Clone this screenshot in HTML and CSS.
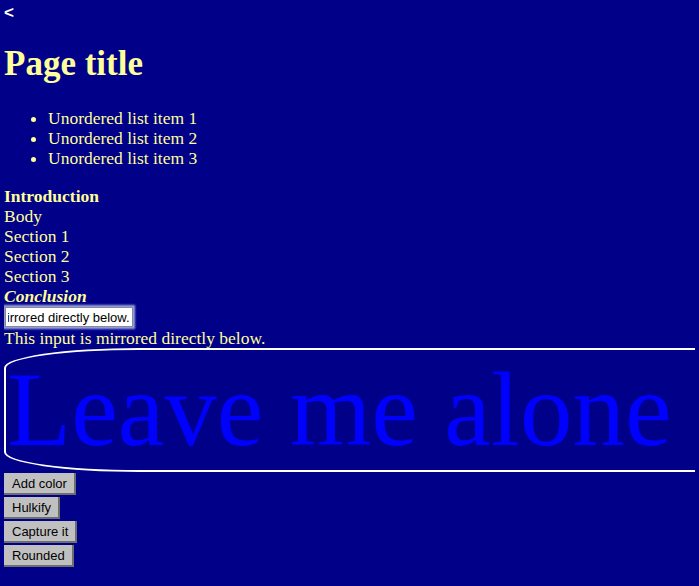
FILE: index.html
```html
<!DOCTYPE html>
<html>
<head>
<meta charset="utf-8">
<link rel="stylesheet" href="styles.css">
</head>
<body>
<div class="back">&lt;</div>
<h1 class="title">Page title</h1>
<ul class="list">
  <li>Unordered list item 1</li>
  <li>Unordered list item 2</li>
  <li>Unordered list item 3</li>
</ul>
<div class="outline">
  <div class="intro">Introduction</div>
  <div>Body</div>
  <div>Section 1</div>
  <div>Section 2</div>
  <div>Section 3</div>
  <div class="conclusion">Conclusion</div>
</div>
<div class="field"><input id="mirror-input" class="mirror-input" type="text" value="This input is mirrored directly below."></div>
<div class="mirror-text">This input is mirrored directly below.</div>
<div class="alone">Leave me alone</div>
<div class="buttons">
  <button class="btn">Add color</button>
  <button class="btn">Hulkify</button>
  <button class="btn">Capture it</button>
  <button class="btn">Rounded</button>
</div>
<script src="script.js"></script>
</body>
</html>
```
FILE: styles.css
```css
html { background: #000088; }
body {
  margin: 4px;
  background: #000088;
  color: #ffff99;
  font-family: "Liberation Serif", "Times New Roman", serif;
  font-size: 17.5px;
  line-height: 20px;
}
.back {
  font-family: "Liberation Sans", Arial, sans-serif;
  font-size: 17px;
  font-weight: bold;
  line-height: 18px;
  color: #ffffff;
}
.title {
  font-size: 35px;
  line-height: 37px;
  margin: 23px 0 26px;
}
.list {
  margin: 0 0 18px;
  padding-left: 44px;
}
.outline .intro { font-weight: bold; }
.outline .conclusion { font-weight: bold; font-style: italic; }
.field { height: 22px; display: flex; align-items: center; }
.mirror-input {
  width: 122px;
  height: 16px;
  margin: 0 0 0 1px;
  padding: 1px 2px;
  border: 1px solid #8a8a8a;
  font-family: "Liberation Sans", Arial, sans-serif;
  font-size: 13px;
  color: #000;
  background: #fff;
  outline: none;
  box-shadow: 0 0 2px 2px #9aa7e8;
}
.mirror-text { margin-top: 0; }
.alone {
  margin-top: 0;
  width: 760px;
  height: 120px;
  border: 2px solid #ffffff;
  border-radius: 135px 0 0 135px / 20px 0 0 20px;
  color: #0000ff;
  font-size: 105px;
  line-height: 120px;
  white-space: nowrap;
  padding-left: 1px;
}
.buttons {
  display: flex;
  flex-direction: column;
  align-items: flex-start;
  gap: 2px;
  margin-top: 1px;
}
.btn {
  font-family: "Liberation Sans", Arial, sans-serif;
  font-size: 13px;
  color: #000;
  background: #c0c0c0;
  border: none;
  border-right: 2px solid #6e6e6e;
  border-bottom: 2px solid #6e6e6e;
  padding: 3px 7px 2px 8px;
  height: 22px;
  line-height: 16px;
  margin: 0;
}
```
FILE: script.js
```js
var el = document.getElementById('mirror-input');
el.focus();
var n = el.value.length;
el.setSelectionRange(n, n);
el.scrollLeft = el.scrollWidth;
```
